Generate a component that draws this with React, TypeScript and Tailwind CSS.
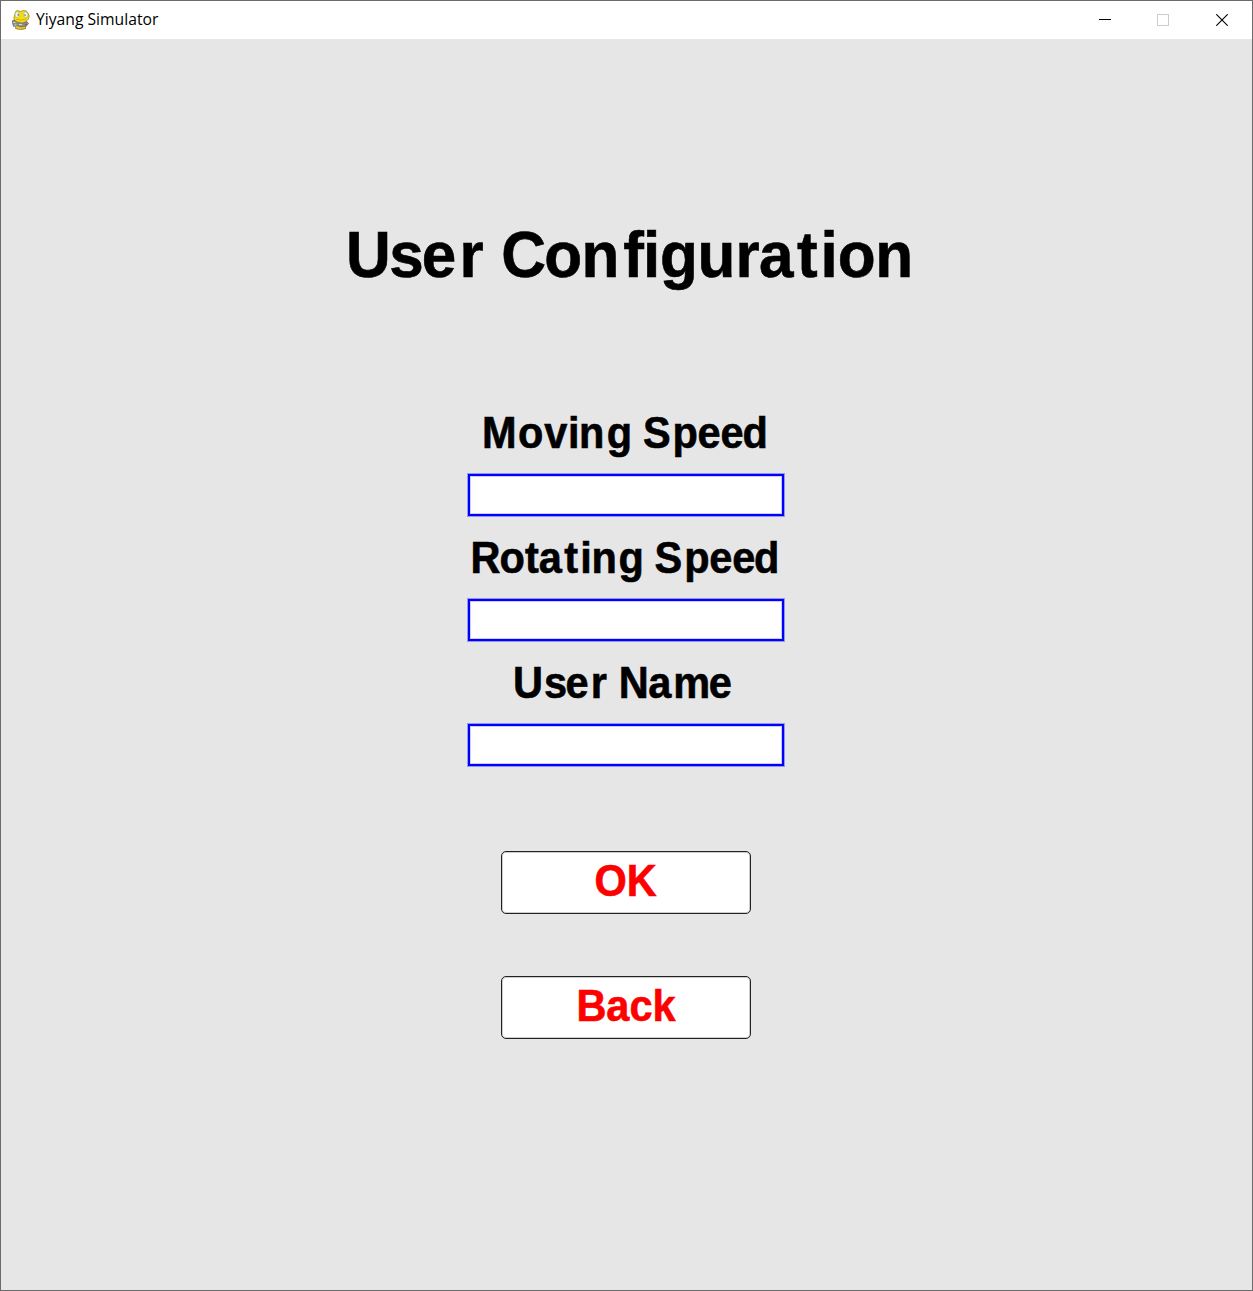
import React from "react";

const FACE = "font-['Liberation_Sans',Arial,sans-serif] font-bold whitespace-nowrap";

// The pygame snake mascot in the window's caption.
function Mascot() {
  return (
    <svg className="h-[22px] w-[20px] shrink-0" viewBox="0 0 20 22">
      <path d="M5 15.500L4.500 19.500Q9 21.500 14.500 19.700L14.500 16z" fill="#eccb10" stroke="#75672a" strokeWidth=".7" />
      <path d="M4 5Q4 1.800 6.500 1.600L9.500 2.500L12.500 1.500Q16 1.300 17 4L18.300 7Q18 10.500 15 12.500L12 14L6 13Q2.500 11.500 2.800 9Z" fill="#f7dc0c" stroke="#8d7b22" strokeWidth=".7" />
      <ellipse cx="6.300" cy="5.600" rx="2.200" ry="2.900" fill="#f1f5f1" stroke="#a2922e" strokeWidth=".4" />
      <ellipse cx="14.600" cy="5.800" rx="2.300" ry="2.900" fill="#f1f5f1" stroke="#a2922e" strokeWidth=".4" />
      <path d="M7.200 4.800v2M14 5.200v2" stroke="#555" strokeWidth="1" />
      <path d="M5 10.300Q10 12 15.500 10" stroke="#c9aa09" strokeWidth=".8" fill="none" />
      <path d="M1.500 11.500L4 11.500L6 13.500L11 14.500L16 12.500L17.500 14.500L15.500 17L10 18L6 16.500L2.500 17.500L1.500 14.500Z" fill="#8b8e8e" stroke="#5a5e60" strokeWidth=".6" />
      <path d="M2.500 13.500h2M3.500 16h2M8 15.500h3" stroke="#dadada" strokeWidth="1" />
      <path d="M14 15.500h2" stroke="#b5414d" strokeWidth="1.600" />
    </svg>
  );
}

function TitleBar() {
  return (
    <header className="flex h-[38px] shrink-0 items-center bg-white pl-[10px]">
      <Mascot />
      <span className="ml-[5px] font-['Open_Sans','Noto_Sans',sans-serif] text-[15.7px] leading-none text-black">
        Yiyang Simulator
      </span>
      <div className="ml-auto flex h-full">
        <button className="flex w-[58px] items-center justify-center" aria-label="Minimize">
          <svg width="12" height="12" shapeRendering="crispEdges"><path d="M0 5.5h12" stroke="#000" /></svg>
        </button>
        <button className="flex w-[58px] items-center justify-center" aria-label="Maximize">
          <svg width="12" height="12" shapeRendering="crispEdges"><rect x=".5" y=".5" width="11" height="11" fill="none" stroke="#ccc" /></svg>
        </button>
        <button className="flex w-[60px] items-center justify-center" aria-label="Close">
          <svg width="12" height="12"><path d="M.3 .3l11.400 11.400M11.700 .3l-11.400 11.400" stroke="#000" strokeWidth="1.1" /></svg>
        </button>
      </div>
    </header>
  );
}

// Slightly condensed bold text; `gaps` holds the extra advance in px after each character.
function SpacedText({ text, gaps = [] }: { text: string; gaps?: number[] }) {
  return (
    <span className="inline-block scale-x-[0.954] whitespace-pre [-webkit-text-stroke:0.6px_currentColor]">
      {text.split("").map((ch, i) => (
        <span key={i} style={{ letterSpacing: `${gaps[i] ?? 0}px` }}>{ch}</span>
      ))}
    </span>
  );
}

function Field({ label, gaps, shift }: { label: string; gaps: number[]; shift: string }) {
  return (
    <div className="flex h-[125px] flex-col items-center">
      <label className={`${FACE} h-[62px] text-[43.500px] leading-[42px] text-black ${shift}`}>
        <SpacedText text={label} gaps={gaps} />
      </label>
      <div className="h-[42px] w-[316px] border-2 border-[#0000ff] bg-white shadow-[0_0_0_1px_rgba(0,0,255,0.35),inset_0_0_0_1px_rgba(0,0,255,0.2)]" />
    </div>
  );
}

function ActionButton({ label }: { label: string }) {
  return (
    <button className={`${FACE} flex h-[63px] w-[250px] items-center justify-center rounded-[5px] border border-[#222] bg-white pb-[2px] text-[43.500px] leading-none text-[#ff0000] shadow-[inset_0_0_0_1px_rgba(0,0,0,0.2)]`}>
      <SpacedText text={label} />
    </button>
  );
}

export default function App() {
  return (
    <div className="flex h-[1291px] w-[1253px] flex-col border border-[#6b6b6b] bg-[#e6e6e6]">
      <TitleBar />
      <main className="flex flex-1 flex-col items-center pr-px">
        <h1 className={`${FACE} mt-[179px] h-[194px] translate-x-[3.2px] text-[65px] leading-[74px] text-black`}>
          <SpacedText
            text="User Configuration"
            gaps={[-1.6, -2, 3.5, 0.2, 0.2, -2, -0.6, 4, -0.9, -0.2, -0.5, 0.2, -0.7, 3.8, 2.8, 0.1, -0.4, 0]}
          />
        </h1>
        <Field label="Moving Speed" shift="-translate-x-[1px]" gaps={[1.5, 0.9, 0.8, -0.5, 2.5, -0.9, 0.1, 2.1, -0.5, -0.1, -1.2]} />
        <Field label="Rotating Speed" shift="-translate-x-[1px]" gaps={[-0.9, 0, -0.1, 2.6, 2.4, -0.5, 1.8, -0.9, 0.1, 2.1, -0.5, -0.1, -1.2]} />
        <Field label="User Name" shift="-translate-x-[3.2px]" gaps={[1.1, -1.7, 2.3, 0, 0.1, -0.5, 2.1, -1.4]} />
        <div className="mt-[64px] flex flex-col gap-[62px]">
          <ActionButton label="OK" />
          <ActionButton label="Back" />
        </div>
      </main>
    </div>
  );
}
